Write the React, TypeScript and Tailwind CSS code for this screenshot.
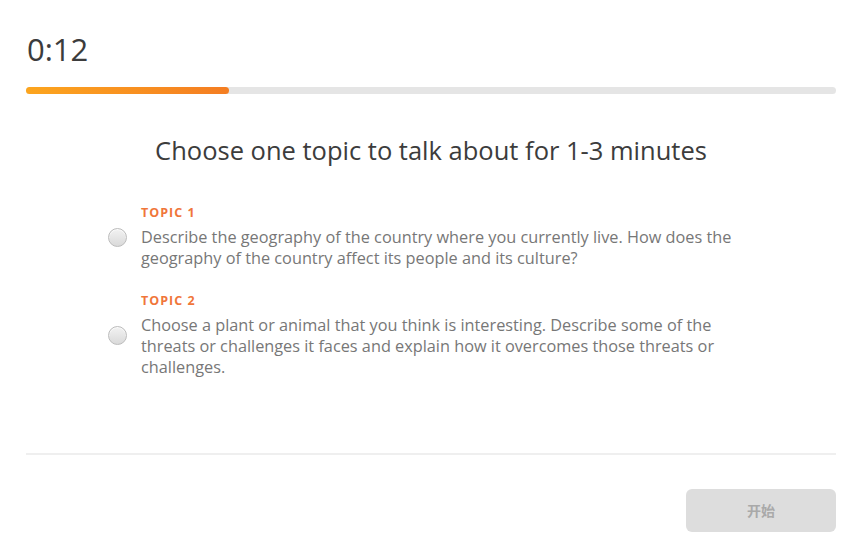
import React from "react";

function Radio() {
  return (
    <div className="h-[19px] w-[19px] shrink-0 rounded-full border border-[#bcbcbc] bg-gradient-to-b from-[#f2f2f2] to-[#dadada] shadow-[inset_0_1px_1px_rgba(255,255,255,0.8)]" />
  );
}

function Topic({ label, text }: { label: string; text: string }) {
  return (
    <div className="flex items-center gap-[14px]">
      <Radio />
      <div className="flex flex-col">
        <div className="text-[12.5px] font-bold tracking-[1px] text-[#f0763a] leading-[16px]">{label}</div>
        <p className="mt-[6px] w-[600px] text-[16.3px] leading-[21px] text-[#777777]">{text}</p>
      </div>
    </div>
  );
}

export default function App() {
  return (
    <div className="h-[547px] w-[860px] bg-white pl-[26px] pr-[24px] font-['Open_Sans',sans-serif]">
      <div className="pt-[30px] text-[31px] leading-[38px] text-[#3c3c3c] pl-[1px]">0:12</div>
      <div className="mt-[19px] h-[7px] w-full rounded-full bg-[#e5e5e5]">
        <div className="h-full w-[203px] rounded-full bg-gradient-to-r from-[#fca51e] to-[#f47d22]" />
      </div>
      <h1 className="mt-[40px] text-center text-[25.5px] leading-[32px] text-[#3c3c3c]">
        Choose one topic to talk about for 1-3 minutes
      </h1>
      <div className="mt-[39px] flex flex-col gap-[24px] pl-[82px]">
        <Topic
          label="TOPIC 1"
          text="Describe the geography of the country where you currently live. How does the geography of the country affect its people and its culture?"
        />
        <Topic
          label="TOPIC 2"
          text="Choose a plant or animal that you think is interesting. Describe some of the threats or challenges it faces and explain how it overcomes those threats or challenges."
        />
      </div>
      <div className="mt-[75px] h-[2px] w-full bg-[#efefef]" />
      <div className="mt-[34px] flex justify-end">
        <button className="h-[43px] w-[150px] rounded-[6px] bg-[#dddddd] text-[14px] font-bold text-[#a9a9a9] font-['Noto_Sans_CJK_SC',sans-serif]">
          开始
        </button>
      </div>
    </div>
  );
}
